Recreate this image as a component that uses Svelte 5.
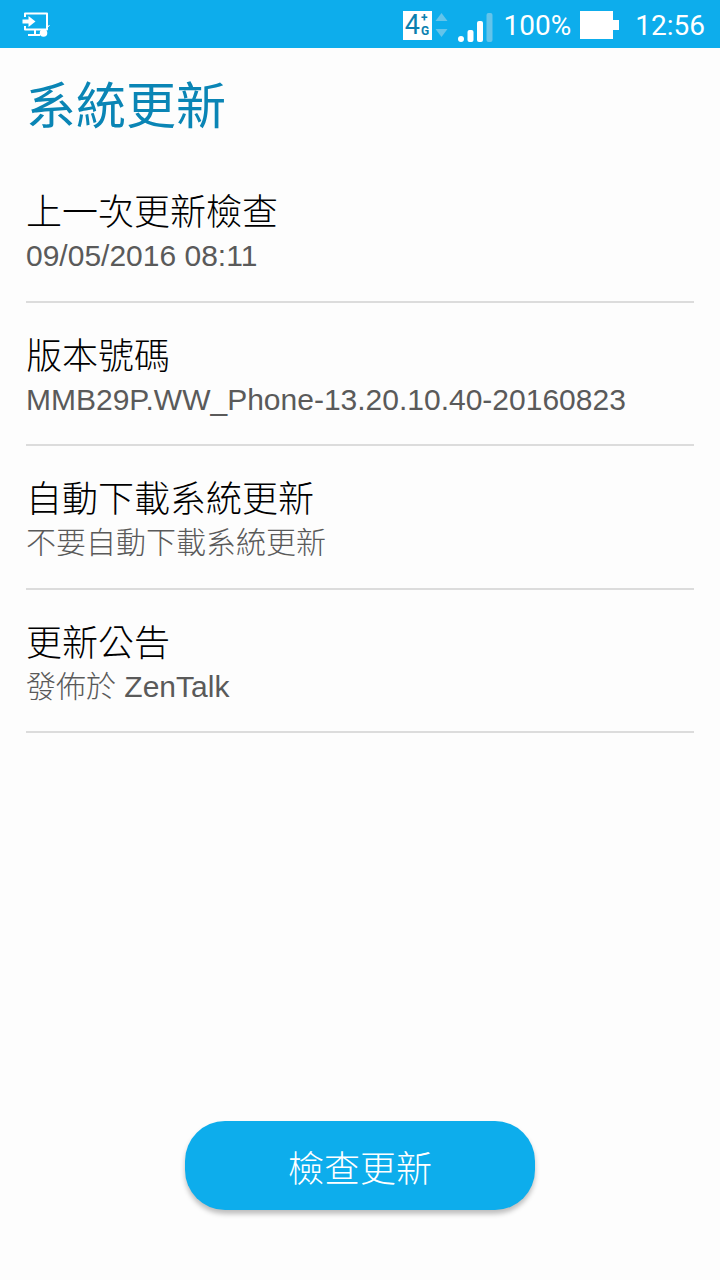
<script>
    const rows = [
        { title: "上一次更新檢查", sub: "09/05/2016 08:11" },
        { title: "版本號碼", sub: "MMB29P.WW_Phone-13.20.10.40-20160823" },
        { title: "自動下載系統更新", sub: "不要自動下載系統更新" },
        { title: "更新公告", sub: "發佈於 ZenTalk" },
    ];
</script>

<div class="screen">
    <div class="status-bar">
        <svg class="cast" width="30" height="28" viewBox="0 0 30 28" fill="none">
            <path d="M3 6V2.5h22v16H3V15" stroke="#fff" stroke-width="2" stroke-linejoin="round" />
            <path d="M0.5 8.5h6V5l7 5.5-7 5.5v-3.5h-6z" fill="#fff" />
            <path d="M13 19v4M6 24h12" stroke="#fff" stroke-width="2" />
            <circle cx="21.5" cy="22" r="3.8" fill="#fff" />
            <path d="M23.5 19l4-5" stroke="#fff" stroke-width="1" />
        </svg>
        <div class="status-right">
            <div class="net">
                <span class="four">4</span>
                <span class="plus"><b>+</b><b>G</b></span>
            </div>
            <svg class="arrows" width="13" height="28" viewBox="0 0 13 28">
                <path d="M6.5 2l6 8H.5z" fill="#64c4ea" />
                <path d="M6.5 26l6-8H.5z" fill="#64c4ea" />
            </svg>
            <svg class="signal" width="35" height="30" viewBox="0 0 35 30">
                <rect x="0" y="23" width="6" height="6" rx="3" fill="#fff" />
                <rect x="9.5" y="17" width="6" height="12" rx="2" fill="#fff" />
                <rect x="19" y="8" width="6" height="21" rx="2" fill="#fff" />
                <rect x="28.5" y="0" width="6" height="29" rx="2" fill="#64c4ea" />
            </svg>
            <span class="pct">100%</span>
            <svg class="battery" width="40" height="28" viewBox="0 0 40 28">
                <path d="M0 0h33v9h6v10h-6v9H0z" fill="#fff" />
            </svg>
            <span class="clock">12:56</span>
        </div>
    </div>

    <h1 class="title">系統更新</h1>

    <div class="list">
        {#each rows as row}
            <div class="row">
                <div class="row-title">{row.title}</div>
                <div class="row-sub">{row.sub}</div>
            </div>
        {/each}
    </div>

    <div class="footer">
        <button class="check">檢查更新</button>
    </div>
</div>

<style>
    :global(body) {
        margin: 0;
        background: #fdfdfd;
    }

    .screen {
        display: flex;
        flex-direction: column;
        width: 720px;
        height: 1280px;
        background: #fdfdfd;
        font-family: "Liberation Sans", "Noto Sans CJK TC", sans-serif;
        overflow: hidden;
    }

    .status-bar {
        display: flex;
        align-items: center;
        justify-content: space-between;
        flex: none;
        height: 48px;
        padding: 0 15px 0 22px;
        box-sizing: border-box;
        background: #0dadec;
        color: #fff;
        font-family: Roboto, sans-serif;
    }

    .cast {
        margin-top: 2px;
    }

    .status-right {
        display: flex;
        align-items: center;
        margin-top: 2px;
    }

    .net {
        display: flex;
        align-items: center;
        justify-content: center;
        gap: 1px;
        width: 29px;
        height: 29px;
        background: #fff;
        color: #0a7fb0;
        line-height: 1;
    }

    .four {
        font-size: 27px;
    }

    .plus {
        display: flex;
        flex-direction: column;
        font-size: 12px;
    }

    .plus b {
        line-height: 13px;
    }

    .arrows {
        margin-left: 3px;
    }

    .signal {
        margin-left: 10px;
        margin-top: 5px;
    }

    .pct {
        margin-left: 11px;
        font-size: 28px;
    }

    .battery {
        margin-left: 9px;
    }

    .clock {
        margin-left: 15px;
        font-size: 28px;
    }

    .title {
        flex: none;
        margin: 0;
        height: 111px;
        padding: 0 26px;
        box-sizing: border-box;
        font-size: 50px;
        font-weight: 400;
        line-height: 118px;
        color: #0a85b5;
    }

    .list {
        flex: none;
        padding: 0 26px;
    }

    .row {
        height: 143.5px;
        padding-top: 29px;
        border-bottom: 2px solid #dcdcdc;
        box-sizing: border-box;
    }

    .row-title {
        font-size: 36px;
        font-weight: 300;
        line-height: 50px;
        color: #000;
    }

    .row-sub {
        font-size: 30px;
        font-weight: 300;
        line-height: 36px;
        color: #5a5a5a;
    }

    .footer {
        display: flex;
        justify-content: center;
        margin-top: auto;
        padding-bottom: 70px;
    }

    .check {
        width: 350px;
        height: 89px;
        border: none;
        border-radius: 40px;
        background: #0dadec;
        box-shadow: 0 4px 5px rgba(0, 0, 0, 0.25);
        color: #fff;
        font-family: inherit;
        font-size: 36px;
        font-weight: 300;
    }
</style>
